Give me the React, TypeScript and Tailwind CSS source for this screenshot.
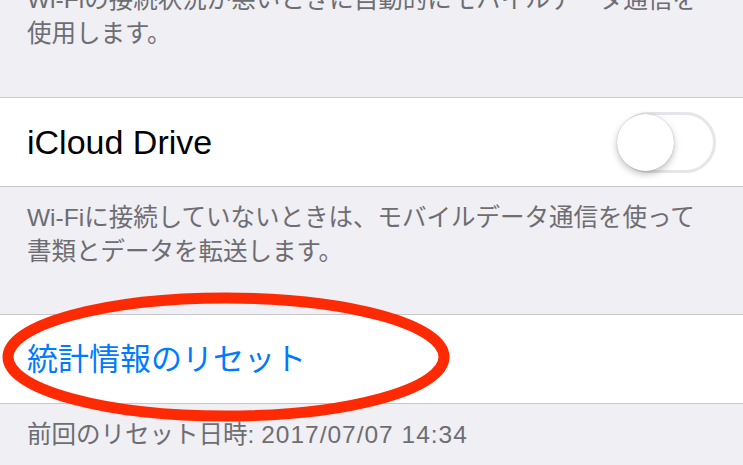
import React from "react";

const font = "font-['Liberation_Sans','Noto_Sans_CJK_JP',sans-serif]";

function Toggle() {
  return (
    <div className="relative h-[61px] w-[98px] rounded-full border-[3px] border-[#e5e5ea] bg-white">
      <div className="absolute left-[-4px] top-[-1px] h-[57px] w-[57px] rounded-full bg-white shadow-[0_3px_7px_rgba(0,0,0,0.25),0_0_1px_rgba(0,0,0,0.3)]" />
    </div>
  );
}

export default function App() {
  return (
    <div className={`relative h-[465px] w-[743px] overflow-hidden bg-[#efeff4] ${font}`}>
      <div className="flex h-[97px] flex-col px-[27px]">
        <p className="mt-[-17px] text-[24.5px] leading-[34px] text-[#6d6d72]">
          Wi-Fiの接続状況が悪いときに自動的にモバイルデータ通信を
          <br />
          使用します。
        </p>
      </div>
      <div className="flex h-[90px] items-center justify-between border-y border-[#c8c7cc] bg-white pl-[27px] pr-[27px]">
        <span className="text-[34px] leading-none text-black">iCloud Drive</span>
        <Toggle />
      </div>
      <div className="flex h-[127px] flex-col px-[27px] pt-[14px]">
        <p className="text-[24.5px] leading-[34px] text-[#6d6d72]">
          Wi-Fiに接続していないときは、モバイルデータ通信を使って
          <br />
          書類とデータを転送します。
        </p>
      </div>
      <div className="flex h-[90px] items-center border-y border-[#c8c7cc] bg-white px-[27px]">
        <span className="text-[31px] leading-none text-[#007aff]">統計情報のリセット</span>
      </div>
      <div className="flex flex-col px-[27px] pt-[14px]">
        <p className="text-[24.5px] leading-[34px] text-[#6d6d72]">
          前回のリセット日時: <span className="tracking-[1px]">2017/07/07 14:34</span>
        </p>
      </div>
      <svg className="pointer-events-none absolute left-0 top-0" width="743" height="465" viewBox="0 0 743 465">
        <ellipse cx="226" cy="357" rx="218" ry="59" fill="none" stroke="#fe2a03" strokeWidth="11" />
      </svg>
    </div>
  );
}
